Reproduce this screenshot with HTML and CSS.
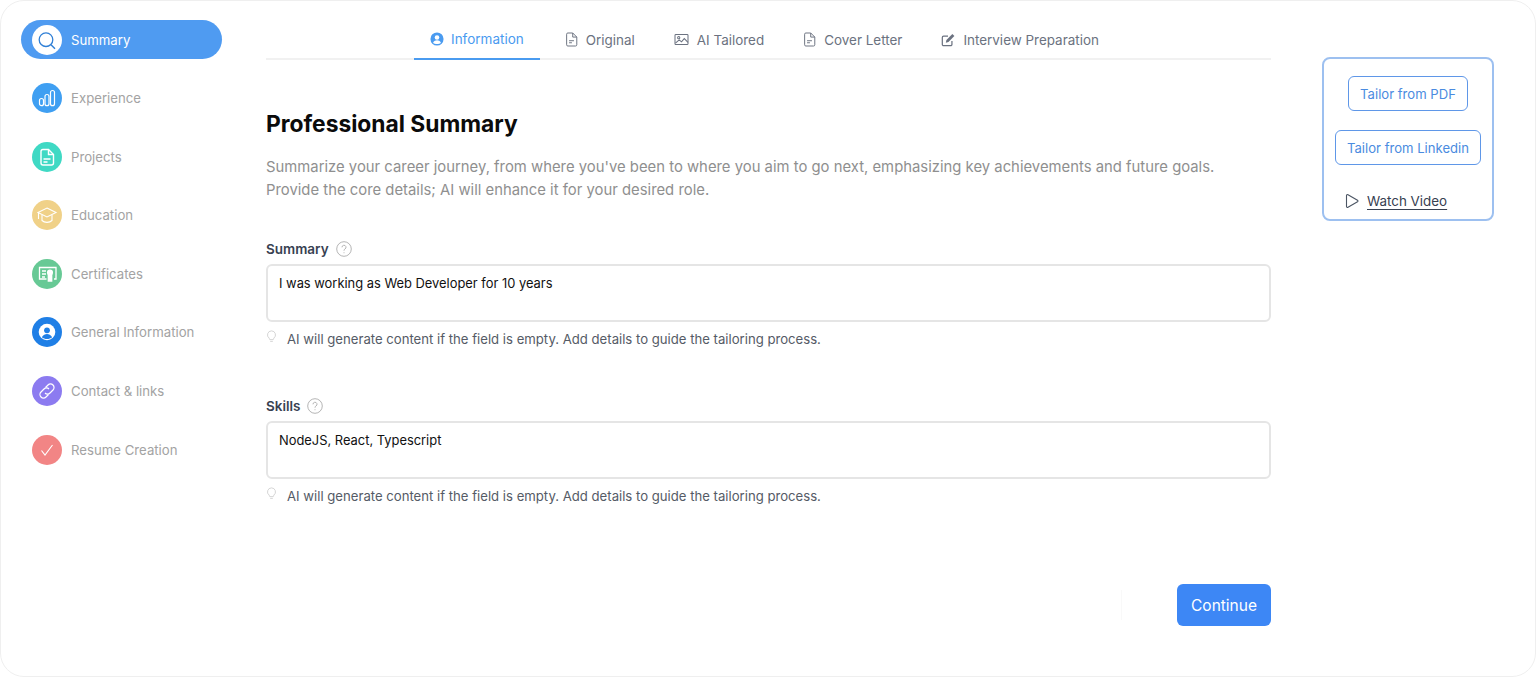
FILE: index.html
```html
<!DOCTYPE html>
<html lang="en">
<head>
<meta charset="utf-8">
<title>Professional Summary</title>
<link rel="stylesheet" href="styles.css">
</head>
<body>
<div class="frame">
  <nav class="sidebar">
    <a class="nav-item active"><span class="nav-icon c-white"><svg viewBox="0 0 30 30" width="30" height="30"><circle cx="14" cy="14.700" r="6.800" fill="none" stroke="#2f7fd6" stroke-width="1.300"/><path d="M19 19.700l4 4" stroke="#2f7fd6" stroke-width="1.500" fill="none"/></svg></span>Summary</a>
    <a class="nav-item"><span class="nav-icon c-blue"><svg viewBox="0 0 30 30" width="30" height="30" fill="none" stroke="#fff" stroke-width="1.200"><rect x="7.500" y="15.500" width="4" height="7.200" rx="2"/><rect x="13" y="11.500" width="4" height="11.200" rx="2"/><rect x="18.500" y="7.500" width="4" height="15.200" rx="2"/></svg></span>Experience</a>
    <a class="nav-item"><span class="nav-icon c-teal"><svg viewBox="0 0 30 30" width="30" height="30" fill="none" stroke="#fff" stroke-width="1.400"><path d="M11 7.500h5.500l5 5v8.500a2 2 0 0 1-2 2h-8.500a2 2 0 0 1-2-2v-11.500a2 2 0 0 1 2-2z"/><path d="M16.500 7.500v5h5M11.500 17h7M11.500 20h4"/></svg></span>Projects</a>
    <a class="nav-item"><span class="nav-icon c-yellow"><svg viewBox="0 0 30 30" width="30" height="30" fill="none" stroke="#fff" stroke-width="1.100"><path d="M15 8l9 4.500-9 4.500-9-4.500z"/><path d="M10 15v5.500c2.500 2.500 7.500 2.500 10 0v-5.500M6.500 13v6"/></svg></span>Education</a>
    <a class="nav-item"><span class="nav-icon c-green"><svg viewBox="0 0 30 30" width="30" height="30" fill="none" stroke="#fff" stroke-width="1.300"><path d="M14.500 20H7.500V8.500h16.500V20h-2"/><path d="M10 12h4M10 15h4M10 18h3"/><circle cx="18" cy="13.500" r="2.400" fill="#fff"/><path d="M16.300 15.500h3.400v6.500h-3.400z" fill="#fff"/></svg></span>Certificates</a>
    <a class="nav-item"><span class="nav-icon c-deep"><svg viewBox="0 0 30 30" width="30" height="30"><circle cx="15" cy="15" r="8.300" fill="#fff"/><circle cx="15" cy="13.300" r="2.900" fill="#1f7fe6"/><path d="M9.800 20.200c1.500-2.500 3.200-3.200 5.200-3.200s3.700.7 5.200 3.200c-2.800 2.400-7.600 2.400-10.400 0z" fill="#1f7fe6"/></svg></span>General Information</a>
    <a class="nav-item"><span class="nav-icon c-purple"><svg viewBox="0 0 30 30" width="30" height="30" fill="none" stroke="#fff" stroke-width="1.200"><path d="M13.500 11.500l2.500-2.500a3.500 3.500 0 0 1 5 5l-3 3a3.500 3.500 0 0 1-5 0"/><path d="M16.500 18.500l-2.500 2.500a3.500 3.500 0 0 1-5-5l3-3a3.500 3.500 0 0 1 5 0"/></svg></span>Contact &amp; links</a>
    <a class="nav-item"><span class="nav-icon c-red"><svg viewBox="0 0 30 30" width="30" height="30" fill="none" stroke="#fff" stroke-width="1.100"><path d="M9.500 15.500l3.500 4.500 7.500-10"/></svg></span>Resume Creation</a>
  </nav>

  <main class="main">
    <div class="tabs">
      <a class="tab active"><svg viewBox="0 0 16 16" width="14" height="14"><circle cx="8" cy="8" r="7.500" fill="#4a9bf0"/><circle cx="8" cy="6.200" r="2.600" fill="#fff"/><path d="M3.500 12.200c1-2 2.800-2.800 4.500-2.800s3.500.8 4.500 2.800c-2.500 2.200-6.500 2.200-9 0z" fill="#fff"/></svg>Information</a>
      <a class="tab"><svg viewBox="0 0 16 18" width="13" height="15" fill="none" stroke="#6b7280" stroke-width="1.200"><path d="M3.500 1h6l5 5v9.500a1.500 1.500 0 0 1-1.500 1.500h-9.500a1.500 1.500 0 0 1-1.500-1.500v-13a1.500 1.500 0 0 1 1.500-1.500z"/><path d="M9.500 1v5h5M5 10.500h6M5 13h3.500"/></svg>Original</a>
      <a class="tab"><svg viewBox="0 0 16 14" width="15" height="13" fill="none" stroke="#6b7280" stroke-width="1.100"><rect x="1" y="1.500" width="14" height="11" rx="1"/><circle cx="5" cy="5" r="1.200"/><path d="M1.500 11l4-3.500 2.500 2 3-3.500 4 4"/></svg>AI Tailored</a>
      <a class="tab"><svg viewBox="0 0 16 18" width="13" height="15" fill="none" stroke="#6b7280" stroke-width="1.200"><path d="M3.500 1h6l5 5v9.500a1.500 1.500 0 0 1-1.500 1.500h-9.500a1.500 1.500 0 0 1-1.500-1.500v-13a1.500 1.500 0 0 1 1.500-1.500z"/><path d="M9.500 1v5h5M5 10.500h6M5 13h3.500"/></svg>Cover Letter</a>
      <a class="tab"><svg viewBox="0 0 16 16" width="14" height="14" fill="none" stroke="#6b7280" stroke-width="1.400"><path d="M12.500 9v4a1.500 1.500 0 0 1-1.500 1.500h-8a1.500 1.500 0 0 1-1.500-1.500v-8a1.500 1.500 0 0 1 1.500-1.500h5"/><path d="M5.500 11l.7-3 6.800-6.800 2.300 2.300-6.800 6.800z" fill="#6b7280" stroke="none"/></svg>Interview Preparation</a>
    </div>

    <h1 class="title">Professional Summary</h1>
    <p class="lead">Summarize your career journey, from where you've been to where you aim to go next, emphasizing key achievements and future goals.<br>Provide the core details; AI will enhance it for your desired role.</p>

    <section class="field">
      <label class="field-label">Summary <svg viewBox="0 0 16 16" width="16" height="16" fill="none" stroke="#b5b5b5" stroke-width="1"><circle cx="8" cy="8" r="7.300"/><path d="M6 6.300a2 2 0 1 1 3 1.700c-.7.400-1 .8-1 1.700M8 11.300v.9"/></svg></label>
      <div class="input">I was working as Web Developer for 10 years</div>
      <p class="hint"><svg viewBox="0 0 12 16" width="11" height="14" fill="none" stroke="#cfcfcf" stroke-width="1"><path d="M6 1a4.600 4.600 0 0 1 2.700 8.300l-.7 1.700h-4l-.7-1.700A4.600 4.600 0 0 1 6 1zM4.500 13h3"/></svg>AI will generate content if the field is empty. Add details to guide the tailoring process.</p>
    </section>

    <section class="field">
      <label class="field-label">Skills <svg viewBox="0 0 16 16" width="16" height="16" fill="none" stroke="#b5b5b5" stroke-width="1"><circle cx="8" cy="8" r="7.300"/><path d="M6 6.300a2 2 0 1 1 3 1.700c-.7.400-1 .8-1 1.700M8 11.300v.9"/></svg></label>
      <div class="input">NodeJS, React, Typescript</div>
      <p class="hint"><svg viewBox="0 0 12 16" width="11" height="14" fill="none" stroke="#cfcfcf" stroke-width="1"><path d="M6 1a4.600 4.600 0 0 1 2.700 8.300l-.7 1.700h-4l-.7-1.700A4.600 4.600 0 0 1 6 1zM4.500 13h3"/></svg>AI will generate content if the field is empty. Add details to guide the tailoring process.</p>
    </section>

    <div class="actions"><span class="faint-rule"></span><button class="continue">Continue</button></div>
  </main>

  <aside class="aside">
    <div class="card">
      <button class="outline">Tailor from PDF</button>
      <button class="outline">Tailor from Linkedin</button>
      <a class="watch"><svg viewBox="0 0 14 16" width="14" height="16" fill="none" stroke="#4b5563" stroke-width="1.100"><path d="M1.500 2.500c0-.8.800-1.200 1.500-.8l9.500 5.500c.6.400.6 1.200 0 1.600l-9.500 5.500c-.7.400-1.500 0-1.500-.8z"/></svg><span>Watch Video</span></a>
    </div>
  </aside>
</div>
</body>
</html>
```

FILE: styles.css
```css
* { box-sizing: border-box; }
html, body { margin: 0; height: 100%; background: #fff; }
body { font-family: Inter, "Liberation Sans", sans-serif; overflow: hidden; }
p, h1 { margin: 0; }

.frame {
  height: 677px;
  border: 1px solid #efefef;
  border-radius: 24px;
  display: grid;
  grid-template-columns: 265px 1005px 1fr;
  background: #fff;
}

.sidebar { padding: 19px 0 0 20px; display: flex; flex-direction: column; gap: 19.6px; }
.nav-item {
  width: 201px; height: 39px;
  display: flex; align-items: center; gap: 9px;
  padding-left: 11px;
  font-size: 13.2px; color: #a3a3a3;
  border-radius: 20px;
}
.nav-item.active { background: #4f9bf1; color: #fff; }
.nav-icon { width: 30px; height: 30px; border-radius: 50%; display: flex; flex: none; }
.c-white { background: #fff; }
.c-blue { background: #3f9ff2; }
.c-teal { background: #3fd9c4; }
.c-yellow { background: #f0d188; }
.c-green { background: #67c995; }
.c-deep { background: #1f7fe6; }
.c-purple { background: #8c7bf0; }
.c-red { background: #f28585; }

.tabs {
  height: 60px;
  margin-top: -1px;
  border-bottom: 2px solid #f1f1f1;
  display: flex;
  gap: 7px;
  padding-left: 148px;
  align-items: stretch;
}
.tab {
  display: flex; align-items: center; gap: 8px;
  padding: 21px 16px 0;
  font-size: 13.45px; color: #6b7280;
  margin-bottom: -2px;
  border-bottom: 2px solid transparent;
}
.tab.active { color: #4a9bf0; border-bottom-color: #4a9bf0; gap: 7px; margin-right: 2px; padding-top: 20px; font-size: 13.5px; }

.title { margin-top: 49px; font-size: 22.8px; line-height: 30px; font-weight: 700; color: #0b0b0b; }
.lead { margin-top: 17px; font-size: 14.85px; line-height: 23px; color: #8f8f8f; }

.field { margin-top: 37px; }
.field + .field { margin-top: 47px; }
.field-label { display: flex; align-items: center; gap: 7px; font-size: 13.5px; font-weight: 600; color: #374151; height: 20px; }
.input {
  margin-top: 5px;
  height: 58px;
  border: 2px solid #e5e5e5;
  border-radius: 6px;
  padding: 8px 11px;
  font-size: 12.9px; line-height: 20px; color: #111;
}
.hint { margin-top: 7px; display: flex; align-items: center; gap: 10px; font-size: 13.15px; line-height: 20px; color: #555b66; }
.hint svg { margin-top: -4px; }

.actions { margin-top: 78px; display: flex; justify-content: flex-end; align-items: center; }
.faint-rule { width: 1px; height: 30px; margin-right: 55px; background: #f9f9f9; }
.continue {
  width: 94px; height: 42px;
  border: 0; border-radius: 6px;
  background: #3d87f5; color: #fff;
  font: 400 15.5px Inter, "Liberation Sans", sans-serif;
}

.aside { padding: 56px 0 0 51px; }
.card {
  width: 172px; height: 164px;
  border: 2px solid #9dc0f0;
  border-radius: 8px;
  display: flex; flex-direction: column; align-items: center;
  padding-top: 17px;
}
.outline {
  height: 35px;
  padding: 0 11.500px;
  border: 1px solid #5f97e8;
  border-radius: 6px;
  background: #fff; color: #4a8be0;
  font: 400 13.1px Inter, "Liberation Sans", sans-serif;
  white-space: nowrap;
}
.outline + .outline { margin-top: 19px; }
.watch { margin-top: 28px; align-self: flex-start; margin-left: 21px; display: flex; align-items: center; gap: 8px; font-size: 13.4px; color: #374151; }
.watch span { text-decoration: underline; text-underline-offset: 3px; }
```
